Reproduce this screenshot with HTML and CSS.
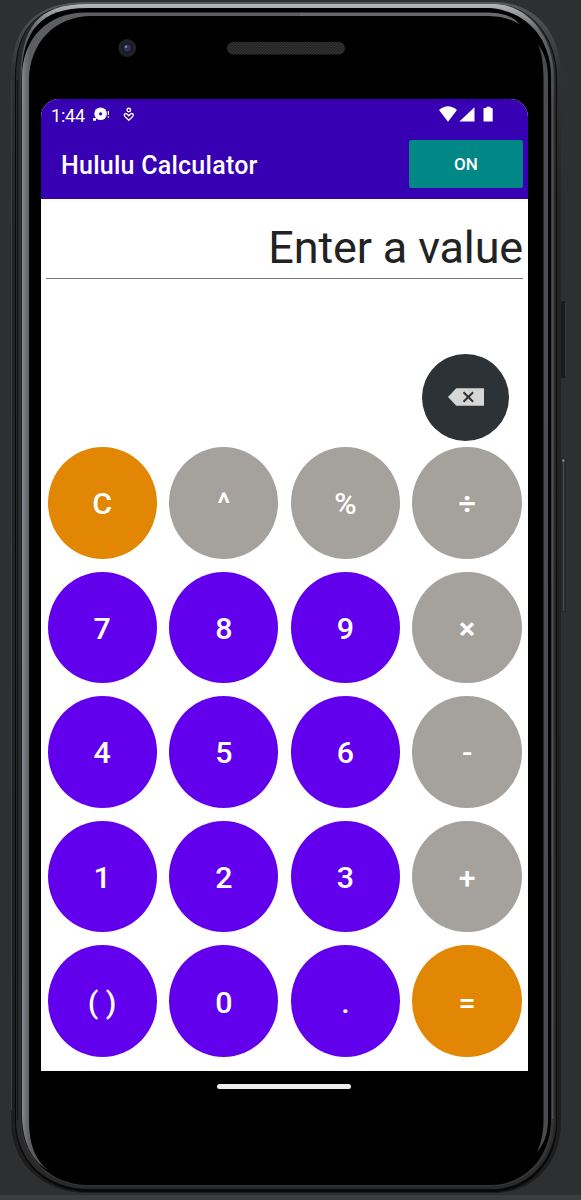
FILE: index.html
```html
<!DOCTYPE html>
<html lang="en">
<head>
<meta charset="utf-8">
<title>Hululu Calculator</title>
<link rel="stylesheet" href="styles.css">
</head>
<body>
<div class="stage">
  <svg class="frame" width="581" height="1200" viewBox="0 0 581 1200" fill="none">
    <defs>
      <linearGradient id="shell" x1="0" y1="0" x2="0" y2="1200" gradientUnits="userSpaceOnUse">
        <stop offset="0" stop-color="#58595a"/><stop offset=".06" stop-color="#303132"/><stop offset=".17" stop-color="#252525"/><stop offset="1" stop-color="#1d1d1d"/>
      </linearGradient>
      <linearGradient id="rim" x1="0" y1="0" x2="0" y2="1200" gradientUnits="userSpaceOnUse">
        <stop offset="0" stop-color="#c5c7c8"/><stop offset=".006" stop-color="#aaacad"/><stop offset=".025" stop-color="#68696a"/><stop offset=".09" stop-color="#3c3c3d"/><stop offset="1" stop-color="#343434"/>
      </linearGradient>
      <linearGradient id="metal" x1="22" y1="0" x2="30" y2="0" gradientUnits="userSpaceOnUse">
        <stop offset="0" stop-color="#8b8d8f"/><stop offset=".4" stop-color="#707275"/><stop offset="1" stop-color="#5c5e62"/>
      </linearGradient>
      <pattern id="mesh" width="3" height="3" patternUnits="userSpaceOnUse">
        <path fill="#252525" d="M0 0h3v3H0z"/><path stroke="#393939" stroke-width=".8" d="M0 3 3 0"/>
      </pattern>
    </defs>
    <path fill="#3c3d3f" d="M0 1195h581v5H0z"/>
    <path fill="#1c1c1c" d="M560.5 301h4q1 0 1 1v75q0 1-1 1h-4z"/>
    <path stroke="#383939" d="M565.5 303v73"/>
    <path fill="#252627" d="M560 458h6v154h-6z"/>
    <path stroke="#48494a" stroke-width="1.6" d="M563.5 460v151"/>
    <circle cx="563.3" cy="460.5" r="1.3" fill="#8a8a8a"/>
    <path fill="url(#shell)" d="M88 2H497C538 4 561 35 561 76V1122C561 1164 533 1193 493 1193H88C42 1193 11 1163 11 1121V78C11 24 38 2 88 2Z"/>
    <path stroke="#3b3c3c" d="M11.5 80V1110"/>
    <path fill="#090909" d="M88 4H496C532 6 557 38 557 78V1122C557 1163 530 1192 492 1192H89C45 1192 15 1161 15 1121V78C15 25 39 4 88 4Z"/>
    <path fill="#292929" d="M88 4H496C532 6 556 38 556 78V1121C556 1160 528 1189 492 1189H89C46 1189 16 1160 16 1121V78C16 25 39 4 88 4Z"/>
    <path fill="url(#rim)" d="M86 4H495C529 5 554 38 554 78V1118C554 1159 528 1186 490 1186H88C50 1186 20.5 1158 20.5 1120V80C20.5 28 38 4 86 4Z"/>
    <path fill="#000" d="M88 8H490C526 11 551 38 551 77V1119C551 1158 524 1185 490 1185H88C50 1185 21.5 1156 21.5 1119V80C21.5 31 40 8 88 8Z"/>
    <path fill="url(#metal)" d="M85 12.5H301V16H91C56 16 29 42 29 81V1119C29 1144 35 1160 48 1170C31 1160 22 1141 22 1114V78C22 37 49 12.5 85 12.5Z"/>
    <path fill="#66696d" d="M300 12.5H485C502 12.5 513 16 520 24.5C509 18 500 16 485 16H300Z"/>
    <path fill="#4b4c50" d="M538 44C545 54 548 64 548 78V1119C548 1134 544 1144 537 1152C542 1141 543.5 1131 543.5 1119V81C543.5 65 542 54 538 44Z"/>
    <path stroke="#505152" stroke-width="1.3" d="M552.5 82V1119"/>
    <path stroke="#111" d="M17.5 80V1120"/>
    <circle cx="127.3" cy="48" r="9" fill="#222"/>
    <circle cx="127.3" cy="48" r="5.5" fill="#171a2b"/>
    <circle cx="127.3" cy="48" r="3.5" fill="#2d355f"/>
    <circle cx="126" cy="46.7" r="1.2" fill="#7985b5"/>
    <rect x="227" y="42" width="118" height="12.5" rx="6" fill="url(#mesh)"/>
  </svg>

  <main class="screen">
    <header class="top">
      <div class="status">
        <span class="clock">1:44</span>
        <svg class="notices" width="44" height="16" viewBox="0 0 44 16">
          <circle cx="8.6" cy="7.8" r="6.3" fill="#fff"/><circle cx="8.6" cy="7.8" r="1.6" fill="#3700b3"/>
          <path d="M1 12h3v2.7H1z" fill="#fff"/><path d="M16.4 5v4m0 1.3v1.4" stroke="#fff" stroke-width="1.2"/>
          <g fill="none" stroke="#fff" stroke-width="1.35"><circle cx="36.8" cy="4" r="1.8"/><path d="m36.8 14.2-4-3.8c-1.3-1.8.3-3.6 2-2.6l2 2 2-2c1.7-1 3.3.8 2 2.6z"/></g>
        </svg>
        <svg class="signals" width="56" height="17" viewBox="0 0 56 17" fill="#fff">
          <path d="M-1 4.1Q8-3.4 17 4.1L8 15.7zM34.5 1.2v14.3H19.4zM46.5.7h4v1.2h1.3q.9 0 .9.9v12.7H43.5V2.8q0-.9.9-.9h2.1z"/>
        </svg>
      </div>
      <div class="appbar">
        <h1 class="title">Hululu Calculator</h1>
        <button class="power">ON</button>
      </div>
    </header>
    <div class="display">Enter a value</div>
    <div class="tools">
      <button class="erase" aria-label="Delete">
        <svg width="36" height="18" viewBox="0 0 36 18"><path d="M0 9 8.3.3H36v17.5H8.3z" fill="#d5d6d5"/><path d="m15.5 4.2 9.6 9.6m0-9.6-9.6 9.6" stroke="#2d3236" stroke-width="2"/></svg>
      </button>
    </div>
    <div class="keys">
      <button class="key accent">C</button><button class="key op">^</button><button class="key op">%</button><button class="key op bold">÷</button>
      <button class="key">7</button><button class="key">8</button><button class="key">9</button><button class="key op bold">×</button>
      <button class="key">4</button><button class="key">5</button><button class="key">6</button><button class="key op">-</button>
      <button class="key">1</button><button class="key">2</button><button class="key">3</button><button class="key op">+</button>
      <button class="key">( )</button><button class="key">0</button><button class="key">.</button><button class="key accent">=</button>
    </div>
  </main>
  <div class="home"></div>
</div>
</body>
</html>
```
FILE: styles.css
```css
* { box-sizing: border-box; }
body { margin: 0; background: #2e2f31; font-family: Roboto, sans-serif; }
button { border: 0; padding: 0; font-family: inherit; color: #fff; }

.stage {
  position: relative;
  width: 581px;
  height: 1200px;
  padding: 99px 53px 0 41px;
  overflow: hidden;
}
.frame { position: absolute; inset: 0; }

.screen {
  position: relative;
  height: 972px;
  background: #fff;
  border-radius: 18px 18px 0 0;
  overflow: hidden;
}
.top { height: 99.5px; background: #3700b3; color: #fff; }
.status { display: flex; height: 41px; padding: 7px 32px 0 10px; }
.clock { width: 41px; font-size: 18px; line-height: 19px; letter-spacing: -.2px; }
.signals { margin-left: auto; overflow: visible; }
.appbar {
  display: flex;
  justify-content: space-between;
  padding: 0 5px 0 20px;
}
.title { margin: 0; font-size: 25px; font-weight: 500; line-height: 51px; letter-spacing: .25px; white-space: nowrap; }
.power {
  width: 114px;
  height: 48px;
  border-radius: 2px;
  background: #018786;
  font-size: 17px;
  font-weight: 500;
}
.display {
  height: 80.5px;
  margin: 0 5px;
  border-bottom: 1.5px solid #777;
  color: #222;
  font-size: 45px;
  line-height: 98px;
  letter-spacing: -.15px;
  text-align: right;
  white-space: nowrap;
}
.tools { display: flex; justify-content: flex-end; padding: 74.5px 19px 0 0; }
.erase {
  display: grid;
  place-items: center;
  width: 87px;
  height: 87px;
  border-radius: 50%;
  background: #2d3236;
}
.keys {
  display: grid;
  grid-template-columns: repeat(4, 109.3px);
  grid-auto-rows: 111.8px;
  gap: 12.75px 12.35px;
  padding: 6.5px 0 0 6.5px;
}
.key {
  border-radius: 50%;
  background: #6200ee;
  font-size: 30.4px;
  font-weight: 500;
  line-height: 36px;
  padding-top: 3px;
}
.op { background: #a5a29d; }
.bold { font-weight: 700; }
.accent { background: #e18703; }
.home {
  position: relative;
  width: 134px;
  height: 5px;
  margin: 12.5px auto 0 176px;
  border-radius: 3px;
  background: #eee;
}
```
